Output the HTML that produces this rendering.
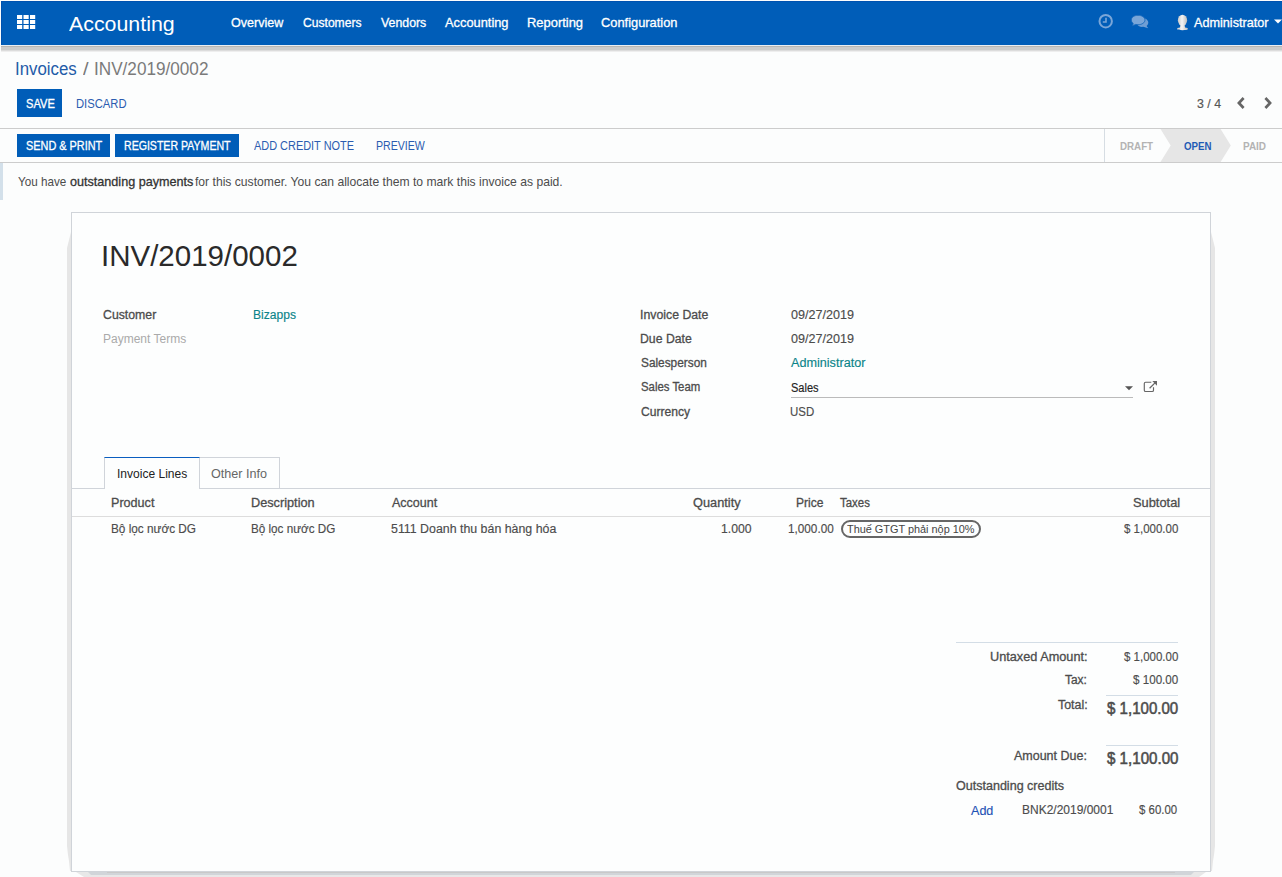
<!DOCTYPE html>
<html><head><meta charset="utf-8">
<style>
html,body{margin:0;padding:0;width:1282px;height:877px;overflow:hidden;background:#fcfdfd;font-family:"Liberation Sans",sans-serif;}
.t{position:absolute;white-space:nowrap;line-height:1;transform-origin:0 0;}
.b{position:absolute;}
</style></head><body>
<div class="b" style="left:1px;top:1px;width:1281px;height:44px;background:#005db8;"></div>
<div class="b" style="left:1px;top:1px;width:1281px;height:1px;background:#0052b0;"></div>
<div class="b" style="left:1px;top:1px;width:1px;height:44px;background:#0052b0;"></div>
<div class="b" style="left:1px;top:45px;width:1281px;height:1px;background:#e9eef3;"></div>
<div class="b" style="left:1px;top:46px;width:1281px;height:1px;background:#b8b6b3;"></div>
<div class="b" style="left:1px;top:47px;width:1281px;height:3px;background:#cbcbcb;"></div>
<div class="b" style="left:1px;top:50px;width:1281px;height:1px;background:#dcdcdc;"></div>
<div class="b" style="left:1px;top:51px;width:1281px;height:1px;background:#eeeeee;"></div>
<svg class="b" style="left:0;top:0" width="40" height="40" viewBox="0 0 40 40"><rect x="17.0" y="15" width="5.2" height="4" fill="#fff"/><rect x="17.0" y="20" width="5.2" height="4" fill="#fff"/><rect x="17.0" y="25" width="5.2" height="4" fill="#fff"/><rect x="23.5" y="15" width="5.2" height="4" fill="#fff"/><rect x="23.5" y="20" width="5.2" height="4" fill="#fff"/><rect x="23.5" y="25" width="5.2" height="4" fill="#fff"/><rect x="30.0" y="15" width="5.2" height="4" fill="#fff"/><rect x="30.0" y="20" width="5.2" height="4" fill="#fff"/><rect x="30.0" y="25" width="5.2" height="4" fill="#fff"/></svg>
<span class="t" style="left:68.70px;top:14px;font-size:20px;color:#fff;transform:scaleX(1.0676);">Accounting</span>
<span class="t" style="left:230.53px;top:16px;font-size:13px;-webkit-text-stroke:0.3px #fff;color:#fff;transform:scaleX(0.9660);">Overview</span>
<span class="t" style="left:302.59px;top:16px;font-size:13px;-webkit-text-stroke:0.3px #fff;color:#fff;transform:scaleX(0.9312);">Customers</span>
<span class="t" style="left:380.54px;top:16px;font-size:13px;-webkit-text-stroke:0.3px #fff;color:#fff;transform:scaleX(0.9494);">Vendors</span>
<span class="t" style="left:445.00px;top:16px;font-size:13px;-webkit-text-stroke:0.3px #fff;color:#fff;transform:scaleX(0.9873);">Accounting</span>
<span class="t" style="left:526.57px;top:16px;font-size:13px;-webkit-text-stroke:0.3px #fff;color:#fff;transform:scaleX(0.9939);">Reporting</span>
<span class="t" style="left:601.36px;top:16px;font-size:13px;-webkit-text-stroke:0.3px #fff;color:#fff;transform:scaleX(0.9887);">Configuration</span>
<span class="t" style="left:1194.20px;top:16px;font-size:13px;-webkit-text-stroke:0.3px #fff;color:#fff;transform:scaleX(0.9733);">Administrator</span>
<span class="t" style="left:15.48px;top:60px;font-size:18px;color:#1f5ba8;transform:scaleX(0.9356);">Invoices</span>
<span class="t" style="left:83.00px;top:60px;font-size:18px;color:#777;transform:scaleX(1.1111);">/</span>
<span class="t" style="left:93.76px;top:60px;font-size:18px;color:#7a7a7a;transform:scaleX(0.9529);">INV/2019/0002</span>
<div class="b" style="left:17px;top:89px;width:45px;height:28px;background:#005db8;"></div>
<span class="t" style="left:25.70px;top:98px;font-size:12px;-webkit-text-stroke:0.3px #fff;color:#fff;transform:scaleX(0.9248);">SAVE</span>
<span class="t" style="left:75.60px;top:98px;font-size:12px;color:#2b5cb0;transform:scaleX(0.9352);">DISCARD</span>
<span class="t" style="left:1196.97px;top:98px;font-size:12px;-webkit-text-stroke:0.15px #555;color:#555;transform:scaleX(1.0301);">3 / 4</span>
<div class="b" style="left:0px;top:128px;width:1282px;height:1px;background:#ccc;"></div>
<div class="b" style="left:17px;top:134px;width:93px;height:23px;background:#005db8;"></div>
<span class="t" style="left:25.51px;top:140px;font-size:12px;-webkit-text-stroke:0.3px #fff;color:#fff;transform:scaleX(0.9072);">SEND &amp; PRINT</span>
<div class="b" style="left:115px;top:134px;width:124px;height:23px;background:#005db8;"></div>
<span class="t" style="left:123.65px;top:140px;font-size:12px;-webkit-text-stroke:0.3px #fff;color:#fff;transform:scaleX(0.8814);">REGISTER PAYMENT</span>
<span class="t" style="left:253.50px;top:140px;font-size:12px;color:#2b5cb0;transform:scaleX(0.9107);">ADD CREDIT NOTE</span>
<span class="t" style="left:375.65px;top:140px;font-size:12px;color:#2b5cb0;transform:scaleX(0.8830);">PREVIEW</span>
<div class="b" style="left:0px;top:162px;width:1282px;height:1px;background:#ccc;"></div>
<div class="b" style="left:0px;top:163px;width:3px;height:37px;background:#d3e0ea;"></div>
<span class="t" style="left:18.47px;top:175px;font-size:13px;color:#4c4c4c;transform:scaleX(0.8985);">You have</span>
<span class="t" style="left:69.50px;top:175px;font-size:13px;-webkit-text-stroke:0.3px #333;color:#333;transform:scaleX(0.9697);">outstanding payments</span>
<span class="t" style="left:195.02px;top:175px;font-size:13px;color:#4c4c4c;transform:scaleX(0.9338);">for this customer. You can allocate them to mark this invoice as paid.</span>
<svg class="b" style="left:1236px;top:96px" width="10" height="14" viewBox="0 0 10 14"><path d="M7.6 2 L2.9 7 L7.6 12" stroke="#666" stroke-width="2.7" fill="none"/></svg>
<svg class="b" style="left:1263px;top:96px" width="10" height="14" viewBox="0 0 10 14"><path d="M2.4 2 L7.1 7 L2.4 12" stroke="#666" stroke-width="2.7" fill="none"/></svg>
<div class="b" style="left:1104px;top:129px;width:1px;height:33px;background:#d6dde3;"></div>
<svg class="b" style="left:1160px;top:129px" width="72" height="33" viewBox="0 0 72 33"><path d="M0.5 0 H60.6 L70.8 16.5 L60.6 33 H0.5 L10.7 16.5 Z" fill="#e6e6e6"/></svg>
<span class="t" style="left:1119.57px;top:141px;font-size:11px;font-weight:bold;color:#b3b3b3;transform:scaleX(0.8871);">DRAFT</span>
<span class="t" style="left:1184.41px;top:141px;font-size:11px;font-weight:bold;color:#1f5bb5;transform:scaleX(0.8807);">OPEN</span>
<span class="t" style="left:1243.25px;top:141px;font-size:11px;font-weight:bold;color:#b3b3b3;transform:scaleX(0.9050);">PAID</span>
<svg class="b" style="left:0;top:0" width="1282" height="877" viewBox="0 0 1282 877"><polygon points="71,232 67,248 67,846 68,855 69,861 70,871 71,871" fill="#e6e6e6"/><polygon points="1211,232 1215,248 1215,846 1214,855 1213,861 1212,871 1211,871" fill="#e6e6e6"/><polygon points="76,872 1206,872 1199,877 84,877" fill="#e8e8e8"/><polygon points="88,872 1194,872 1191,875 91,875" fill="#d1d5d9"/><rect x="107" y="872" width="1068" height="1" fill="#c9c9c9"/></svg>
<div class="b" style="left:71px;top:212px;width:1138px;height:658px;background:#fdfefe;border:1px solid #d0d4d9;"></div>
<span class="t" style="left:101.45px;top:241px;font-size:30px;color:#2a2a2a;transform:scaleX(0.9832);">INV/2019/0002</span>
<span class="t" style="left:103.39px;top:309px;font-size:12.5px;-webkit-text-stroke:0.3px #4c4c4c;color:#4c4c4c;transform:scaleX(0.9836);">Customer</span>
<span class="t" style="left:253.43px;top:309px;font-size:12.5px;-webkit-text-stroke:0.15px #0b8489;color:#0b8489;transform:scaleX(0.9660);">Bizapps</span>
<span class="t" style="left:103.04px;top:333px;font-size:12.5px;color:#aaa;transform:scaleX(0.9602);">Payment Terms</span>
<span class="t" style="left:640.09px;top:309px;font-size:12.5px;-webkit-text-stroke:0.3px #4c4c4c;color:#4c4c4c;transform:scaleX(0.9842);">Invoice Date</span>
<span class="t" style="left:640.22px;top:333px;font-size:12.5px;-webkit-text-stroke:0.3px #4c4c4c;color:#4c4c4c;transform:scaleX(0.9803);">Due Date</span>
<span class="t" style="left:640.67px;top:357px;font-size:12.5px;-webkit-text-stroke:0.3px #4c4c4c;color:#4c4c4c;transform:scaleX(0.9474);">Salesperson</span>
<span class="t" style="left:640.69px;top:381px;font-size:12.5px;-webkit-text-stroke:0.3px #4c4c4c;color:#4c4c4c;transform:scaleX(0.9098);">Sales Team</span>
<span class="t" style="left:640.59px;top:406px;font-size:12.5px;-webkit-text-stroke:0.3px #4c4c4c;color:#4c4c4c;transform:scaleX(0.9688);">Currency</span>
<span class="t" style="left:790.80px;top:309px;font-size:12.5px;-webkit-text-stroke:0.15px #4c4c4c;color:#4c4c4c;transform:scaleX(1.0049);">09/27/2019</span>
<span class="t" style="left:790.80px;top:333px;font-size:12.5px;-webkit-text-stroke:0.15px #4c4c4c;color:#4c4c4c;transform:scaleX(1.0049);">09/27/2019</span>
<span class="t" style="left:791.30px;top:357px;font-size:12.5px;-webkit-text-stroke:0.15px #0b8489;color:#0b8489;transform:scaleX(1.0109);">Administrator</span>
<span class="t" style="left:790.80px;top:382px;font-size:12.5px;-webkit-text-stroke:0.15px #222;color:#222;transform:scaleX(0.8826);">Sales</span>
<div class="b" style="left:791px;top:397px;width:342px;height:1px;background:#bbb;"></div>
<svg class="b" style="left:1124px;top:386px" width="10" height="5" viewBox="0 0 10 5"><path d="M1 0.3 H9 L5 4.3 Z" fill="#555"/></svg>
<svg class="b" style="left:1143px;top:380px" width="15" height="13" viewBox="0 0 15 13"><path d="M8.3 2.2 H2.6 Q1.3 2.2 1.3 3.5 V10.2 Q1.3 11.5 2.6 11.5 H9.2 Q10.5 11.5 10.5 10.2 V7.3" stroke="#666" stroke-width="1.15" fill="none"/><path d="M6.6 8.3 L12 2.9" stroke="#666" stroke-width="1.25" fill="none"/><polygon points="9.3,1 14,1 14,5.7" fill="#666"/></svg>
<span class="t" style="left:790.44px;top:406px;font-size:12.5px;-webkit-text-stroke:0.15px #4c4c4c;color:#4c4c4c;transform:scaleX(0.9166);">USD</span>
<div class="b" style="left:72px;top:488px;width:1138px;height:1px;background:#d0d4da;"></div>
<div class="b" style="left:104px;top:457px;width:96px;height:32px;background:#fdfefe;border:1px solid #d0d4da;border-top:1px solid #0a5ec0;border-bottom:none;box-sizing:border-box;"></div>
<div class="b" style="left:200px;top:457px;width:80px;height:31px;background:#fdfefe;border:1px solid #d0d4da;border-left:none;border-bottom:none;box-sizing:border-box;"></div>
<span class="t" style="left:117.12px;top:468px;font-size:12.5px;color:#222;transform:scaleX(0.9625);">Invoice Lines</span>
<span class="t" style="left:211.43px;top:468px;font-size:12.5px;color:#666;transform:scaleX(1.0092);">Other Info</span>
<span class="t" style="left:110.59px;top:497px;font-size:12.5px;-webkit-text-stroke:0.3px #4c4c4c;color:#4c4c4c;transform:scaleX(1.0071);">Product</span>
<span class="t" style="left:250.98px;top:497px;font-size:12.5px;-webkit-text-stroke:0.3px #4c4c4c;color:#4c4c4c;transform:scaleX(1.0173);">Description</span>
<span class="t" style="left:391.70px;top:497px;font-size:12.5px;-webkit-text-stroke:0.3px #4c4c4c;color:#4c4c4c;transform:scaleX(1.0008);">Account</span>
<span class="t" style="left:693.13px;top:497px;font-size:12.5px;-webkit-text-stroke:0.3px #4c4c4c;color:#4c4c4c;transform:scaleX(1.0217);">Quantity</span>
<span class="t" style="left:795.83px;top:497px;font-size:12.5px;-webkit-text-stroke:0.3px #4c4c4c;color:#4c4c4c;transform:scaleX(0.9652);">Price</span>
<span class="t" style="left:840.27px;top:497px;font-size:12.5px;-webkit-text-stroke:0.3px #4c4c4c;color:#4c4c4c;transform:scaleX(0.9143);">Taxes</span>
<span class="t" style="left:1133.32px;top:497px;font-size:12.5px;-webkit-text-stroke:0.3px #4c4c4c;color:#4c4c4c;transform:scaleX(1.0284);">Subtotal</span>
<div class="b" style="left:72px;top:516px;width:1138px;height:1px;background:#ddd;"></div>
<span class="t" style="left:110.66px;top:523px;font-size:12.5px;-webkit-text-stroke:0.15px #4c4c4c;color:#4c4c4c;transform:scaleX(0.9421);">Bộ lọc nước DG</span>
<span class="t" style="left:251.07px;top:523px;font-size:12.5px;-webkit-text-stroke:0.15px #4c4c4c;color:#4c4c4c;transform:scaleX(0.9342);">Bộ lọc nước DG</span>
<span class="t" style="left:391.21px;top:523px;font-size:12.5px;-webkit-text-stroke:0.15px #4c4c4c;color:#4c4c4c;transform:scaleX(0.9894);">5111 Doanh thu bán hàng hóa</span>
<span class="t" style="left:721.48px;top:523px;font-size:12.5px;-webkit-text-stroke:0.15px #4c4c4c;color:#4c4c4c;transform:scaleX(0.9774);">1.000</span>
<span class="t" style="left:787.72px;top:523px;font-size:12.5px;-webkit-text-stroke:0.15px #4c4c4c;color:#4c4c4c;transform:scaleX(0.9397);">1,000.00</span>
<span class="t" style="left:1123.79px;top:523px;font-size:12.5px;-webkit-text-stroke:0.15px #4c4c4c;color:#4c4c4c;transform:scaleX(0.9197);">$ 1,000.00</span>
<div class="b" style="left:841px;top:520px;width:140px;height:18px;border:2px solid #666;border-radius:9px;box-sizing:border-box;"></div>
<span class="t" style="left:847.48px;top:524px;font-size:11.5px;color:#444;transform:scaleX(0.9468);">Thuế GTGT phải nộp 10%</span>
<div class="b" style="left:956px;top:642px;width:222px;height:1px;background:#d3dde6;"></div>
<span class="t" style="left:989.65px;top:651px;font-size:12.5px;-webkit-text-stroke:0.3px #4c4c4c;color:#4c4c4c;transform:scaleX(1.0173);">Untaxed Amount:</span>
<span class="t" style="left:1123.99px;top:651px;font-size:12.5px;-webkit-text-stroke:0.15px #4c4c4c;color:#4c4c4c;transform:scaleX(0.9197);">$ 1,000.00</span>
<span class="t" style="left:1065.26px;top:674px;font-size:12.5px;-webkit-text-stroke:0.3px #4c4c4c;color:#4c4c4c;transform:scaleX(0.9554);">Tax:</span>
<span class="t" style="left:1133.08px;top:674px;font-size:12.5px;-webkit-text-stroke:0.15px #4c4c4c;color:#4c4c4c;transform:scaleX(0.9300);">$ 100.00</span>
<div class="b" style="left:1106px;top:695px;width:72px;height:1px;background:#d3dde6;"></div>
<span class="t" style="left:1057.55px;top:699px;font-size:12.5px;-webkit-text-stroke:0.3px #4c4c4c;color:#4c4c4c;transform:scaleX(0.9930);">Total:</span>
<span class="t" style="left:1107.25px;top:700px;font-size:16.5px;-webkit-text-stroke:0.55px #4c4c4c;color:#4c4c4c;transform:scaleX(0.9130);">$ 1,100.00</span>
<div class="b" style="left:1106px;top:745px;width:72px;height:1px;background:#d3dde6;"></div>
<span class="t" style="left:1014.20px;top:750px;font-size:12.5px;-webkit-text-stroke:0.3px #4c4c4c;color:#4c4c4c;transform:scaleX(0.9990);">Amount Due:</span>
<span class="t" style="left:1106.85px;top:750px;font-size:16.5px;-webkit-text-stroke:0.55px #4c4c4c;color:#4c4c4c;transform:scaleX(0.9169);">$ 1,100.00</span>
<span class="t" style="left:955.54px;top:780px;font-size:12.5px;-webkit-text-stroke:0.3px #4c4c4c;color:#4c4c4c;transform:scaleX(1.0029);">Outstanding credits</span>
<span class="t" style="left:971.20px;top:805px;font-size:12.5px;-webkit-text-stroke:0.15px #1f52b5;color:#1f52b5;transform:scaleX(1.0047);">Add</span>
<span class="t" style="left:1022.04px;top:804px;font-size:12.5px;-webkit-text-stroke:0.15px #4c4c4c;color:#4c4c4c;transform:scaleX(0.9591);">BNK2/2019/0001</span>
<span class="t" style="left:1138.89px;top:804px;font-size:12.5px;-webkit-text-stroke:0.15px #4c4c4c;color:#4c4c4c;transform:scaleX(0.9143);">$ 60.00</span>
<svg class="b" style="left:1096px;top:12px" width="20" height="20" viewBox="0 0 20 20"><circle cx="9.7" cy="9.2" r="6.2" stroke="#7aa6d8" stroke-width="2" fill="none"/><path d="M10 5.8 V10 H6.8" stroke="#7aa6d8" stroke-width="1.6" fill="none"/></svg>
<svg class="b" style="left:1130px;top:14px" width="20" height="16" viewBox="0 0 20 16"><path d="M9.5 3.8 C13.8 3.2 18.3 5.2 18.3 8.6 C18.3 10.2 17.5 11.3 16.6 12 L18.2 14.3 L13.2 12.8 C10.5 13.2 8.2 12.1 7.3 10.5 Z" fill="#6f9ed4"/><path d="M8 1.3 C11.8 1.3 15 3.3 15 6 C15 8.8 11.8 10.7 8 10.7 C7.2 10.7 6.4 10.6 5.7 10.4 L2.2 11.9 L3.3 9.6 C2.1 8.7 1.3 7.4 1.3 6 C1.3 3.3 4.3 1.3 8 1.3 Z" fill="#7aa6d8" stroke="#0f63b9" stroke-width="0.8"/></svg>
<svg class="b" style="left:1175px;top:13px" width="15" height="18" viewBox="0 0 15 18"><defs><linearGradient id="ug" x1="0" x2="1"><stop offset="0" stop-color="#c9c9c9"/><stop offset="0.45" stop-color="#f4f4f4"/><stop offset="1" stop-color="#bdbdbd"/></linearGradient></defs><ellipse cx="7.5" cy="7.3" rx="4.6" ry="5.6" fill="url(#ug)"/><path d="M5.5 11.5 H9.5 L10 14.5 C12 14.8 13 15.3 13 16 C13 16.8 10.5 17.2 7.5 17.2 C4.5 17.2 2 16.8 2 16 C2 15.3 3 14.8 5 14.5 Z" fill="url(#ug)"/></svg>
<svg class="b" style="left:1274px;top:19px" width="8" height="5" viewBox="0 0 8 5"><path d="M0 0.5 H8 L4 4.5 Z" fill="#fff"/></svg>
</body></html>
